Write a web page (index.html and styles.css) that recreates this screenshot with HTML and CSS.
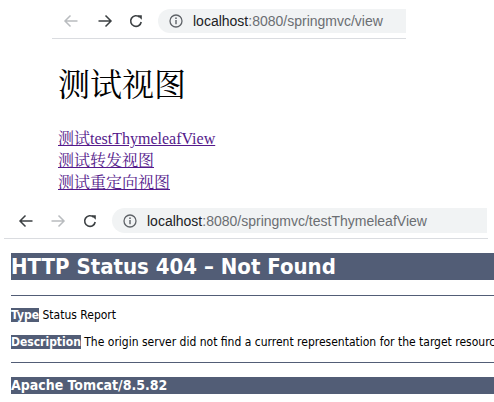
FILE: index.html
```html
<!DOCTYPE html>
<html lang="zh-CN">
<head>
<meta charset="utf-8">
<title>测试视图</title>
<link rel="stylesheet" href="styles.css">
</head>
<body>
<section class="shot shot-view">
  <div class="toolbar">
    <span class="nav nav-back disabled">
      <svg width="16" height="16" viewBox="0 0 16 16"><path d="M14.5 8H2M7.5 2.5L2 8l5.5 5.5" fill="none" stroke="currentColor" stroke-width="1.5"/></svg>
    </span>
    <span class="nav nav-fwd">
      <svg width="16" height="16" viewBox="0 0 16 16"><path d="M1.5 8H14M8.5 2.5L14 8l-5.5 5.5" fill="none" stroke="currentColor" stroke-width="1.5"/></svg>
    </span>
    <span class="nav nav-reload">
      <svg width="16" height="16" viewBox="0 0 16 16"><path d="M13.2 9A5.3 5.3 0 1 1 11.6 4.2" fill="none" stroke="currentColor" stroke-width="1.6"/><path d="M9.2 2.2H13.8V6.8Z" fill="currentColor"/></svg>
    </span>
    <div class="omnibox">
      <svg class="info" width="14" height="14" viewBox="0 0 14 14"><circle cx="7" cy="7" r="6" fill="none" stroke="currentColor" stroke-width="1.3"/><rect x="6.3" y="6" width="1.4" height="4.2" fill="currentColor"/><circle cx="7" cy="4.2" r="0.85" fill="currentColor"/></svg>
      <span class="url"><span class="host">localhost</span>:8080/springmvc/view</span>
    </div>
  </div>
  <div class="view-page">
    <h1 class="view-title">测试视图</h1>
    <a class="view-link" href="#">测试testThymeleafView</a>
    <a class="view-link" href="#">测试转发视图</a>
    <a class="view-link" href="#">测试重定向视图</a>
  </div>
</section>

<section class="shot shot-tomcat">
  <div class="toolbar">
    <span class="nav nav-back">
      <svg width="16" height="16" viewBox="0 0 16 16"><path d="M14.5 8H2M7.5 2.5L2 8l5.5 5.5" fill="none" stroke="currentColor" stroke-width="1.5"/></svg>
    </span>
    <span class="nav nav-fwd disabled">
      <svg width="16" height="16" viewBox="0 0 16 16"><path d="M1.5 8H14M8.5 2.5L14 8l-5.5 5.5" fill="none" stroke="currentColor" stroke-width="1.5"/></svg>
    </span>
    <span class="nav nav-reload">
      <svg width="16" height="16" viewBox="0 0 16 16"><path d="M13.2 9A5.3 5.3 0 1 1 11.6 4.2" fill="none" stroke="currentColor" stroke-width="1.6"/><path d="M9.2 2.2H13.8V6.8Z" fill="currentColor"/></svg>
    </span>
    <div class="omnibox">
      <svg class="info" width="14" height="14" viewBox="0 0 14 14"><circle cx="7" cy="7" r="6" fill="none" stroke="currentColor" stroke-width="1.3"/><rect x="6.3" y="6" width="1.4" height="4.2" fill="currentColor"/><circle cx="7" cy="4.2" r="0.85" fill="currentColor"/></svg>
      <span class="url"><span class="host">localhost</span>:8080/springmvc/testThymeleafView</span>
    </div>
  </div>
  <div class="tomcat-page">
    <h1 class="tc-h1">HTTP Status 404 – Not Found</h1>
    <hr class="line">
    <p class="tc-p"><b class="tc-b">Type</b> Status Report</p>
    <p class="tc-p"><b class="tc-b">Description</b> The origin server did not find a current representation for the target resource or is not willing to disclose that one exists.</p>
    <hr class="line">
    <h3 class="tc-h3">Apache Tomcat/8.5.82</h3>
  </div>
</section>
</body>
</html>
```

FILE: styles.css
```css
html, body {
  margin: 0;
  padding: 0;
  background: #ffffff;
}
body {
  width: 494px;
  height: 402px;
  overflow: hidden;
  font-family: "Liberation Sans", Arial, sans-serif;
}

/* ---------- browser chrome ---------- */
.toolbar {
  display: flex;
  align-items: center;
  box-sizing: border-box;
  border-bottom: 1px solid #dadce0;
}
.nav {
  display: flex;
  align-items: center;
  justify-content: center;
  width: 16px;
  height: 16px;
  color: #3c4043;
}
.nav.disabled {
  color: #b9bcbf;
}
.omnibox {
  display: flex;
  align-items: center;
  background: #f1f3f4;
  border-radius: 13px 0 0 13px;
  box-sizing: border-box;
  padding-left: 11px;
  color: #5f6368;
  white-space: nowrap;
  overflow: hidden;
}
.info {
  flex: none;
  color: #5f6368;
}
.url {
  margin-left: 10px;
  font-size: 14px;
  color: #6b6e72;
}
.host {
  color: #202124;
}

/* ---------- first screenshot ---------- */
.shot-view {
  margin-left: 52px;
  width: 354px;
  height: 200px;
}
.shot-view .toolbar {
  height: 39px;
  padding: 9px 0 5px 11px;
}
.shot-view .nav-fwd { margin-left: 18px; }
.shot-view .nav-reload { margin-left: 15px; }
.shot-view .omnibox {
  margin-left: 14px;
  height: 24px;
  flex: 1;
}
.view-page {
  padding-left: 6px;
  font-family: "Liberation Serif", "Noto Serif CJK SC", "Noto Sans CJK SC", serif;
}
.view-title {
  margin: 26px 0 0;
  font-size: 32px;
  font-weight: normal;
  line-height: 40px;
  color: #000;
}
.view-link {
  display: block;
  width: max-content;
  font-size: 16px;
  line-height: 22px;
  color: #551a8b;
}
.view-title + .view-link {
  margin-top: 23px;
}

/* ---------- second screenshot ---------- */
.shot-tomcat {
  height: 202px;
}
.shot-tomcat .toolbar {
  margin-left: 4px;
  width: 484px;
  height: 39px;
  padding: 8px 0 5px 14px;
}
.shot-tomcat .nav-fwd { margin-left: 16px; }
.shot-tomcat .nav-reload { margin-left: 16px; }
.shot-tomcat .omnibox {
  margin-left: 14px;
  height: 25px;
  flex: 1;
  margin-right: 1px;
}

.tomcat-page {
  margin-left: 11px;
  width: 483px;
  font-family: "DejaVu Sans Condensed", "DejaVu Sans", Tahoma, sans-serif;
  white-space: nowrap;
  overflow: hidden;
}
.tc-h1 {
  margin: 14px 0 15px;
  font-size: 22px;
  line-height: 27px;
  font-weight: bold;
  color: #fff;
  background: #525d76;
}
.line {
  display: block;
  height: 1px;
  margin: 0;
  border: none;
  background: #525d76;
}
.tc-p {
  margin: 12px 0;
  font-size: 12px;
  line-height: 15px;
  color: #000;
}
.tc-b {
  color: #fff;
  background: #525d76;
}
.tc-h3 {
  margin: 14px 0 0;
  font-size: 14px;
  line-height: 17px;
  font-weight: bold;
  color: #fff;
  background: #525d76;
}
```
